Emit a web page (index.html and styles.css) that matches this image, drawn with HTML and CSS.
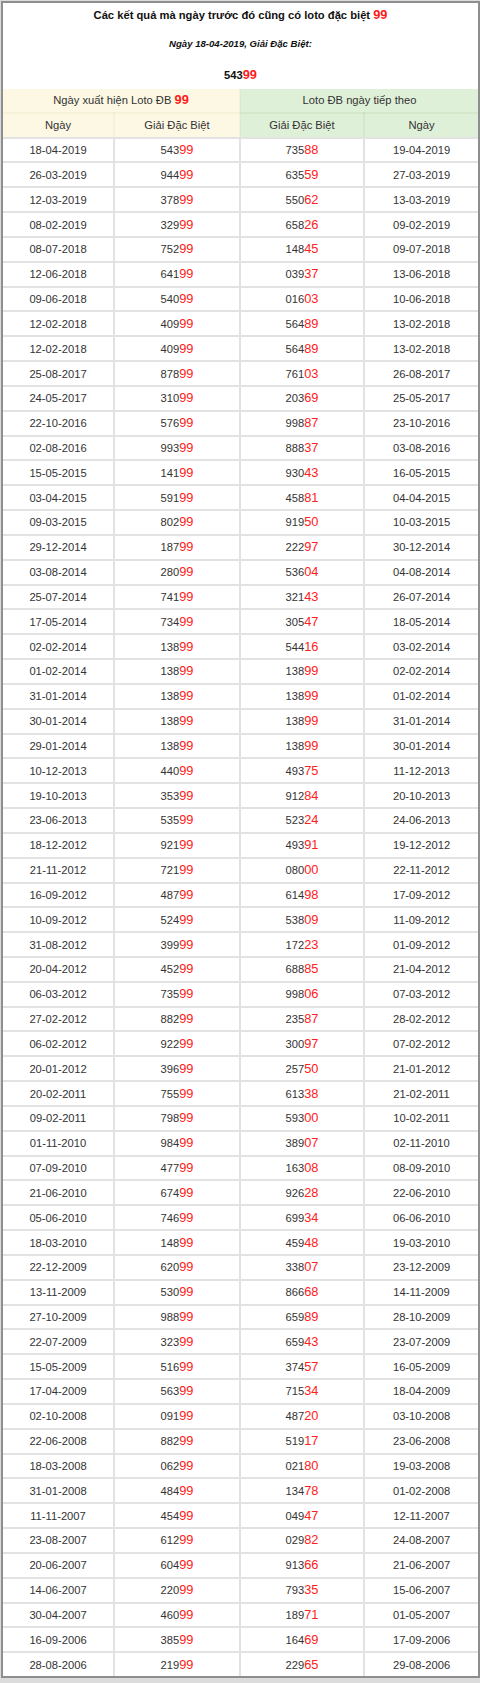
FILE: index.html
```html
<!DOCTYPE html>
<html lang="vi">
<head>
<meta charset="utf-8">
<title>Loto đặc biệt 99</title>
<link rel="stylesheet" href="styles.css">
</head>
<body>
<div class="frame">
  <div class="intro">
    <div class="intro-title">Các kết quả mà ngày trước đó cũng có loto đặc biệt <span class="hl-b">99</span></div>
    <div class="intro-date">Ngày 18-04-2019, Giải Đặc Biệt:</div>
    <div class="intro-num">543<span class="hl-b">99</span></div>
  </div>
  <table class="results">
    <colgroup><col class="c1"><col class="c2"><col class="c3"><col class="c4"></colgroup>
    <thead>
      <tr class="head-top">
        <th colspan="2" class="warm">Ngày xuất hiện Loto ĐB <span class="hl-b">99</span></th>
        <th colspan="2" class="cool">Loto ĐB ngày tiếp theo</th>
      </tr>
      <tr class="head-sub">
        <th class="warm">Ngày</th>
        <th class="warm">Giải Đặc Biệt</th>
        <th class="cool">Giải Đặc Biệt</th>
        <th class="cool">Ngày</th>
      </tr>
    </thead>
    <tbody>
<tr><td>18-04-2019</td><td>543<span class="hl">99</span></td><td>735<span class="hl">88</span></td><td>19-04-2019</td></tr>
<tr><td>26-03-2019</td><td>944<span class="hl">99</span></td><td>635<span class="hl">59</span></td><td>27-03-2019</td></tr>
<tr><td>12-03-2019</td><td>378<span class="hl">99</span></td><td>550<span class="hl">62</span></td><td>13-03-2019</td></tr>
<tr><td>08-02-2019</td><td>329<span class="hl">99</span></td><td>658<span class="hl">26</span></td><td>09-02-2019</td></tr>
<tr><td>08-07-2018</td><td>752<span class="hl">99</span></td><td>148<span class="hl">45</span></td><td>09-07-2018</td></tr>
<tr><td>12-06-2018</td><td>641<span class="hl">99</span></td><td>039<span class="hl">37</span></td><td>13-06-2018</td></tr>
<tr><td>09-06-2018</td><td>540<span class="hl">99</span></td><td>016<span class="hl">03</span></td><td>10-06-2018</td></tr>
<tr><td>12-02-2018</td><td>409<span class="hl">99</span></td><td>564<span class="hl">89</span></td><td>13-02-2018</td></tr>
<tr><td>12-02-2018</td><td>409<span class="hl">99</span></td><td>564<span class="hl">89</span></td><td>13-02-2018</td></tr>
<tr><td>25-08-2017</td><td>878<span class="hl">99</span></td><td>761<span class="hl">03</span></td><td>26-08-2017</td></tr>
<tr><td>24-05-2017</td><td>310<span class="hl">99</span></td><td>203<span class="hl">69</span></td><td>25-05-2017</td></tr>
<tr><td>22-10-2016</td><td>576<span class="hl">99</span></td><td>998<span class="hl">87</span></td><td>23-10-2016</td></tr>
<tr><td>02-08-2016</td><td>993<span class="hl">99</span></td><td>888<span class="hl">37</span></td><td>03-08-2016</td></tr>
<tr><td>15-05-2015</td><td>141<span class="hl">99</span></td><td>930<span class="hl">43</span></td><td>16-05-2015</td></tr>
<tr><td>03-04-2015</td><td>591<span class="hl">99</span></td><td>458<span class="hl">81</span></td><td>04-04-2015</td></tr>
<tr><td>09-03-2015</td><td>802<span class="hl">99</span></td><td>919<span class="hl">50</span></td><td>10-03-2015</td></tr>
<tr><td>29-12-2014</td><td>187<span class="hl">99</span></td><td>222<span class="hl">97</span></td><td>30-12-2014</td></tr>
<tr><td>03-08-2014</td><td>280<span class="hl">99</span></td><td>536<span class="hl">04</span></td><td>04-08-2014</td></tr>
<tr><td>25-07-2014</td><td>741<span class="hl">99</span></td><td>321<span class="hl">43</span></td><td>26-07-2014</td></tr>
<tr><td>17-05-2014</td><td>734<span class="hl">99</span></td><td>305<span class="hl">47</span></td><td>18-05-2014</td></tr>
<tr><td>02-02-2014</td><td>138<span class="hl">99</span></td><td>544<span class="hl">16</span></td><td>03-02-2014</td></tr>
<tr><td>01-02-2014</td><td>138<span class="hl">99</span></td><td>138<span class="hl">99</span></td><td>02-02-2014</td></tr>
<tr><td>31-01-2014</td><td>138<span class="hl">99</span></td><td>138<span class="hl">99</span></td><td>01-02-2014</td></tr>
<tr><td>30-01-2014</td><td>138<span class="hl">99</span></td><td>138<span class="hl">99</span></td><td>31-01-2014</td></tr>
<tr><td>29-01-2014</td><td>138<span class="hl">99</span></td><td>138<span class="hl">99</span></td><td>30-01-2014</td></tr>
<tr><td>10-12-2013</td><td>440<span class="hl">99</span></td><td>493<span class="hl">75</span></td><td>11-12-2013</td></tr>
<tr><td>19-10-2013</td><td>353<span class="hl">99</span></td><td>912<span class="hl">84</span></td><td>20-10-2013</td></tr>
<tr><td>23-06-2013</td><td>535<span class="hl">99</span></td><td>523<span class="hl">24</span></td><td>24-06-2013</td></tr>
<tr><td>18-12-2012</td><td>921<span class="hl">99</span></td><td>493<span class="hl">91</span></td><td>19-12-2012</td></tr>
<tr><td>21-11-2012</td><td>721<span class="hl">99</span></td><td>080<span class="hl">00</span></td><td>22-11-2012</td></tr>
<tr><td>16-09-2012</td><td>487<span class="hl">99</span></td><td>614<span class="hl">98</span></td><td>17-09-2012</td></tr>
<tr><td>10-09-2012</td><td>524<span class="hl">99</span></td><td>538<span class="hl">09</span></td><td>11-09-2012</td></tr>
<tr><td>31-08-2012</td><td>399<span class="hl">99</span></td><td>172<span class="hl">23</span></td><td>01-09-2012</td></tr>
<tr><td>20-04-2012</td><td>452<span class="hl">99</span></td><td>688<span class="hl">85</span></td><td>21-04-2012</td></tr>
<tr><td>06-03-2012</td><td>735<span class="hl">99</span></td><td>998<span class="hl">06</span></td><td>07-03-2012</td></tr>
<tr><td>27-02-2012</td><td>882<span class="hl">99</span></td><td>235<span class="hl">87</span></td><td>28-02-2012</td></tr>
<tr><td>06-02-2012</td><td>922<span class="hl">99</span></td><td>300<span class="hl">97</span></td><td>07-02-2012</td></tr>
<tr><td>20-01-2012</td><td>396<span class="hl">99</span></td><td>257<span class="hl">50</span></td><td>21-01-2012</td></tr>
<tr><td>20-02-2011</td><td>755<span class="hl">99</span></td><td>613<span class="hl">38</span></td><td>21-02-2011</td></tr>
<tr><td>09-02-2011</td><td>798<span class="hl">99</span></td><td>593<span class="hl">00</span></td><td>10-02-2011</td></tr>
<tr><td>01-11-2010</td><td>984<span class="hl">99</span></td><td>389<span class="hl">07</span></td><td>02-11-2010</td></tr>
<tr><td>07-09-2010</td><td>477<span class="hl">99</span></td><td>163<span class="hl">08</span></td><td>08-09-2010</td></tr>
<tr><td>21-06-2010</td><td>674<span class="hl">99</span></td><td>926<span class="hl">28</span></td><td>22-06-2010</td></tr>
<tr><td>05-06-2010</td><td>746<span class="hl">99</span></td><td>699<span class="hl">34</span></td><td>06-06-2010</td></tr>
<tr><td>18-03-2010</td><td>148<span class="hl">99</span></td><td>459<span class="hl">48</span></td><td>19-03-2010</td></tr>
<tr><td>22-12-2009</td><td>620<span class="hl">99</span></td><td>338<span class="hl">07</span></td><td>23-12-2009</td></tr>
<tr><td>13-11-2009</td><td>530<span class="hl">99</span></td><td>866<span class="hl">68</span></td><td>14-11-2009</td></tr>
<tr><td>27-10-2009</td><td>988<span class="hl">99</span></td><td>659<span class="hl">89</span></td><td>28-10-2009</td></tr>
<tr><td>22-07-2009</td><td>323<span class="hl">99</span></td><td>659<span class="hl">43</span></td><td>23-07-2009</td></tr>
<tr><td>15-05-2009</td><td>516<span class="hl">99</span></td><td>374<span class="hl">57</span></td><td>16-05-2009</td></tr>
<tr><td>17-04-2009</td><td>563<span class="hl">99</span></td><td>715<span class="hl">34</span></td><td>18-04-2009</td></tr>
<tr><td>02-10-2008</td><td>091<span class="hl">99</span></td><td>487<span class="hl">20</span></td><td>03-10-2008</td></tr>
<tr><td>22-06-2008</td><td>882<span class="hl">99</span></td><td>519<span class="hl">17</span></td><td>23-06-2008</td></tr>
<tr><td>18-03-2008</td><td>062<span class="hl">99</span></td><td>021<span class="hl">80</span></td><td>19-03-2008</td></tr>
<tr><td>31-01-2008</td><td>484<span class="hl">99</span></td><td>134<span class="hl">78</span></td><td>01-02-2008</td></tr>
<tr><td>11-11-2007</td><td>454<span class="hl">99</span></td><td>049<span class="hl">47</span></td><td>12-11-2007</td></tr>
<tr><td>23-08-2007</td><td>612<span class="hl">99</span></td><td>029<span class="hl">82</span></td><td>24-08-2007</td></tr>
<tr><td>20-06-2007</td><td>604<span class="hl">99</span></td><td>913<span class="hl">66</span></td><td>21-06-2007</td></tr>
<tr><td>14-06-2007</td><td>220<span class="hl">99</span></td><td>793<span class="hl">35</span></td><td>15-06-2007</td></tr>
<tr><td>30-04-2007</td><td>460<span class="hl">99</span></td><td>189<span class="hl">71</span></td><td>01-05-2007</td></tr>
<tr><td>16-09-2006</td><td>385<span class="hl">99</span></td><td>164<span class="hl">69</span></td><td>17-09-2006</td></tr>
<tr><td>28-08-2006</td><td>219<span class="hl">99</span></td><td>229<span class="hl">65</span></td><td>29-08-2006</td></tr>
    </tbody>
  </table>
</div>
</body>
</html>
```
FILE: styles.css
```css
html, body {
  margin: 0;
  padding: 0;
}
body {
  background: #dcdcdc;
  font-family: "Liberation Sans", Arial, sans-serif;
  color: #333;
  width: 480px;
  height: 1683px;
  overflow: hidden;
}
.frame {
  margin: 1px 0 0 1px;
  width: 479px;
  box-sizing: border-box;
  border: 2px solid #8e8e8e;
  background: #fff;
}
.intro {
  padding: 3px 0 5px;
  text-align: center;
  color: #111;
  font-weight: bold;
}
.intro-title {
  font-size: 11.2px;
  line-height: 18px;
}
.intro-date {
  margin-top: 11px;
  font-size: 9.6px;
  font-style: italic;
  line-height: 18px;
}
.intro-num {
  margin-top: 13px;
  font-size: 11.2px;
  line-height: 18px;
}
.hl-b {
  color: #ff1a1a;
  font-size: 12.8px;
  font-weight: bold;
}
.hl {
  color: #ff2020;
  font-size: 12.8px;
}
.results {
  width: 475px;
  border-collapse: collapse;
  table-layout: fixed;
  border-style: hidden;
  font-size: 11.2px;
}
.c1 { width: 111px; }
.c2 { width: 126px; }
.c3 { width: 124px; }
.c4 { width: 114px; }
.results th,
.results td {
  height: 22.84px;
  padding: 0;
  text-align: center;
  vertical-align: middle;
  font-weight: normal;
  line-height: 16px;
}
.results td {
  border: 2px solid #e2e2e2;
}
.results th {
  border: 2px solid rgba(150, 130, 60, 0.06);
}
.results th.cool {
  border-color: rgba(60, 130, 40, 0.07);
}
.results .head-sub th {
  border-bottom: 2px solid #e2e2e2;
}
.warm {
  background: #fcf8e3;
}
.cool {
  background: #dff0d8;
}
```
